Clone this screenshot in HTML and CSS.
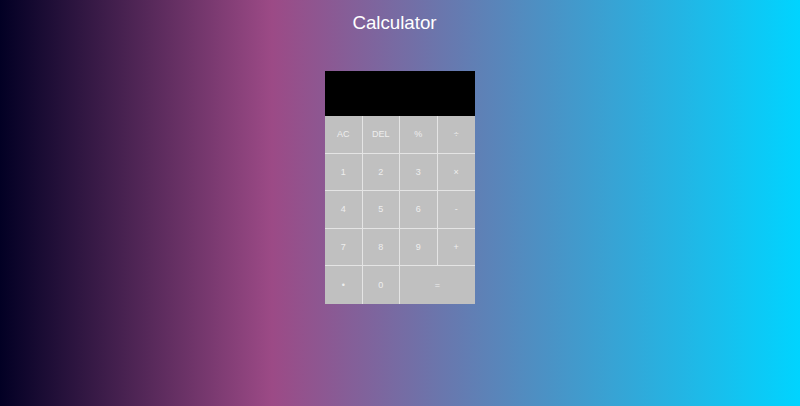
FILE: index.html
```html
<!DOCTYPE html>
<html>
<head>
<meta charset="utf-8">
<link rel="stylesheet" href="styles.css">
</head>
<body>
<h1 class="title">Calculator</h1>
<div class="calculator">
  <div class="display"></div>
  <div class="keys">
    <button class="key">AC</button>
    <button class="key">DEL</button>
    <button class="key">%</button>
    <button class="key">÷</button>
    <button class="key">1</button>
    <button class="key">2</button>
    <button class="key">3</button>
    <button class="key">×</button>
    <button class="key">4</button>
    <button class="key">5</button>
    <button class="key">6</button>
    <button class="key">-</button>
    <button class="key">7</button>
    <button class="key">8</button>
    <button class="key">9</button>
    <button class="key">+</button>
    <button class="key">•</button>
    <button class="key">0</button>
    <button class="key wide">=</button>
  </div>
</div>
</body>
</html>
```
FILE: styles.css
```css
html, body {
  margin: 0;
  height: 100%;
}
body {
  background: linear-gradient(90deg, #020024 0%, #9c4a86 34%, #00d4ff 100%);
  font-family: "Liberation Sans", Arial, sans-serif;
  display: flex;
  flex-direction: column;
  align-items: center;
}
.title {
  color: #fff;
  font-weight: normal;
  font-size: 18.72px;
  line-height: 22px;
  margin: 12px 11px 0 0;
}
.calculator {
  margin-top: 37px;
  width: 150px;
}
.display {
  background: #000;
  height: 45px;
}
.keys {
  display: grid;
  grid-template-columns: repeat(4, 1fr);
  grid-auto-rows: 37.5px;
}
.key {
  background: #c0c0c0;
  border: 1px solid #e4e4e4;
  border-width: 0 1px 1px 0;
  color: #eeeeee;
  font-family: "Liberation Sans", Arial, sans-serif;
  font-size: 9px;
  padding: 0;
  margin: 0;
}
.key:nth-child(4n) {
  border-right-width: 0;
}
.key.wide {
  grid-column: span 2;
  border-right-width: 0;
}
.key:nth-last-child(-n+3) {
  border-bottom-width: 0;
}
```
